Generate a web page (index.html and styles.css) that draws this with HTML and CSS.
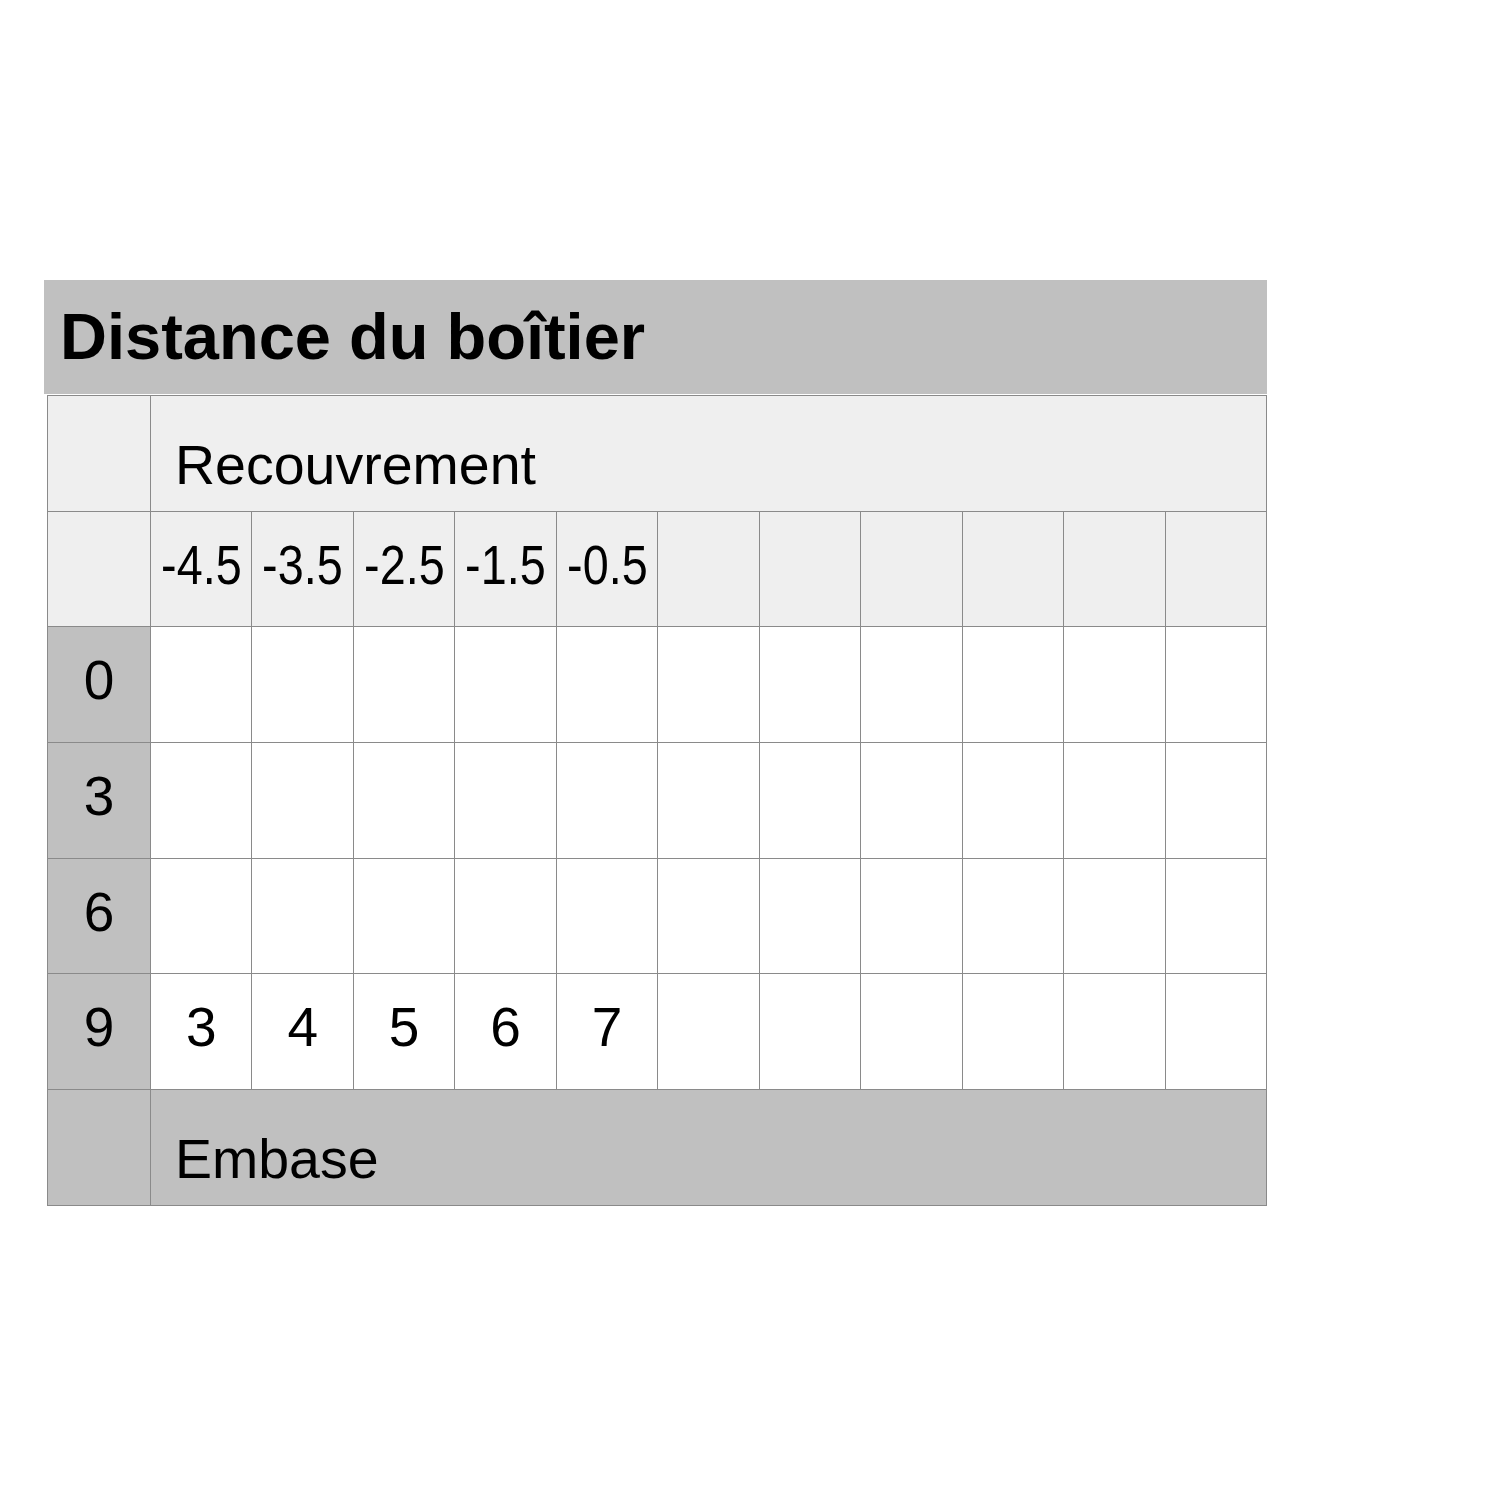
FILE: index.html
```html
<!DOCTYPE html>
<html lang="fr">
<head>
<meta charset="utf-8">
<title>Distance du boîtier</title>
<link rel="stylesheet" href="styles.css">
</head>
<body>
<div class="wrap">
  <div class="title">Distance du boîtier</div>
  <table class="grid">
    <colgroup>
      <col class="c-label">
      <col><col><col><col><col><col><col><col><col><col><col>
    </colgroup>
    <tr class="head">
      <td></td>
      <td colspan="11" class="span">Recouvrement</td>
    </tr>
    <tr class="head">
      <td></td>
      <td class="num"><span>-4.5</span></td>
      <td class="num"><span>-3.5</span></td>
      <td class="num"><span>-2.5</span></td>
      <td class="num"><span>-1.5</span></td>
      <td class="num"><span>-0.5</span></td>
      <td></td><td></td><td></td><td></td><td></td><td></td>
    </tr>
    <tr class="body">
      <th>0</th>
      <td></td><td></td><td></td><td></td><td></td><td></td><td></td><td></td><td></td><td></td><td></td>
    </tr>
    <tr class="body">
      <th>3</th>
      <td></td><td></td><td></td><td></td><td></td><td></td><td></td><td></td><td></td><td></td><td></td>
    </tr>
    <tr class="body">
      <th>6</th>
      <td></td><td></td><td></td><td></td><td></td><td></td><td></td><td></td><td></td><td></td><td></td>
    </tr>
    <tr class="body">
      <th>9</th>
      <td>3</td><td>4</td><td>5</td><td>6</td><td>7</td><td></td><td></td><td></td><td></td><td></td><td></td>
    </tr>
    <tr class="foot">
      <th></th>
      <td colspan="11" class="span">Embase</td>
    </tr>
  </table>
</div>
</body>
</html>
```

FILE: styles.css
```css
html, body {
  margin: 0;
  padding: 0;
  background: #ffffff;
}

body {
  font-family: "Liberation Sans", Arial, Helvetica, sans-serif;
  color: #000;
}

.wrap {
  width: 1223px;
  margin: 280px 0 0 44px;
}

.title {
  height: 114px;
  background: #c0c0c0;
  font-weight: bold;
  font-size: 65px;
  line-height: 114px;
  padding-left: 16px;
  box-sizing: border-box;
}

.grid {
  margin: 1px 0 0 3px;
  width: 1220px;
  border-collapse: collapse;
  table-layout: fixed;
}

.c-label {
  width: 103px;
}

.grid td,
.grid th {
  border: 1px solid #8a8a8a;
  height: 115.7px;
  padding: 0 0 9px 0;
  font-size: 55px;
  font-weight: normal;
  text-align: center;
  vertical-align: middle;
  box-sizing: border-box;
}

.head td {
  background: #efefef;
}

.body th,
.foot th,
.foot td {
  background: #c0c0c0;
}

.body td {
  background: #ffffff;
}

.grid .span {
  text-align: left;
  vertical-align: bottom;
  font-size: 55.5px;
  padding: 0 0 14px 24px;
}

.num span {
  display: inline-block;
  transform: scaleX(0.85);
  white-space: nowrap;
}
```
